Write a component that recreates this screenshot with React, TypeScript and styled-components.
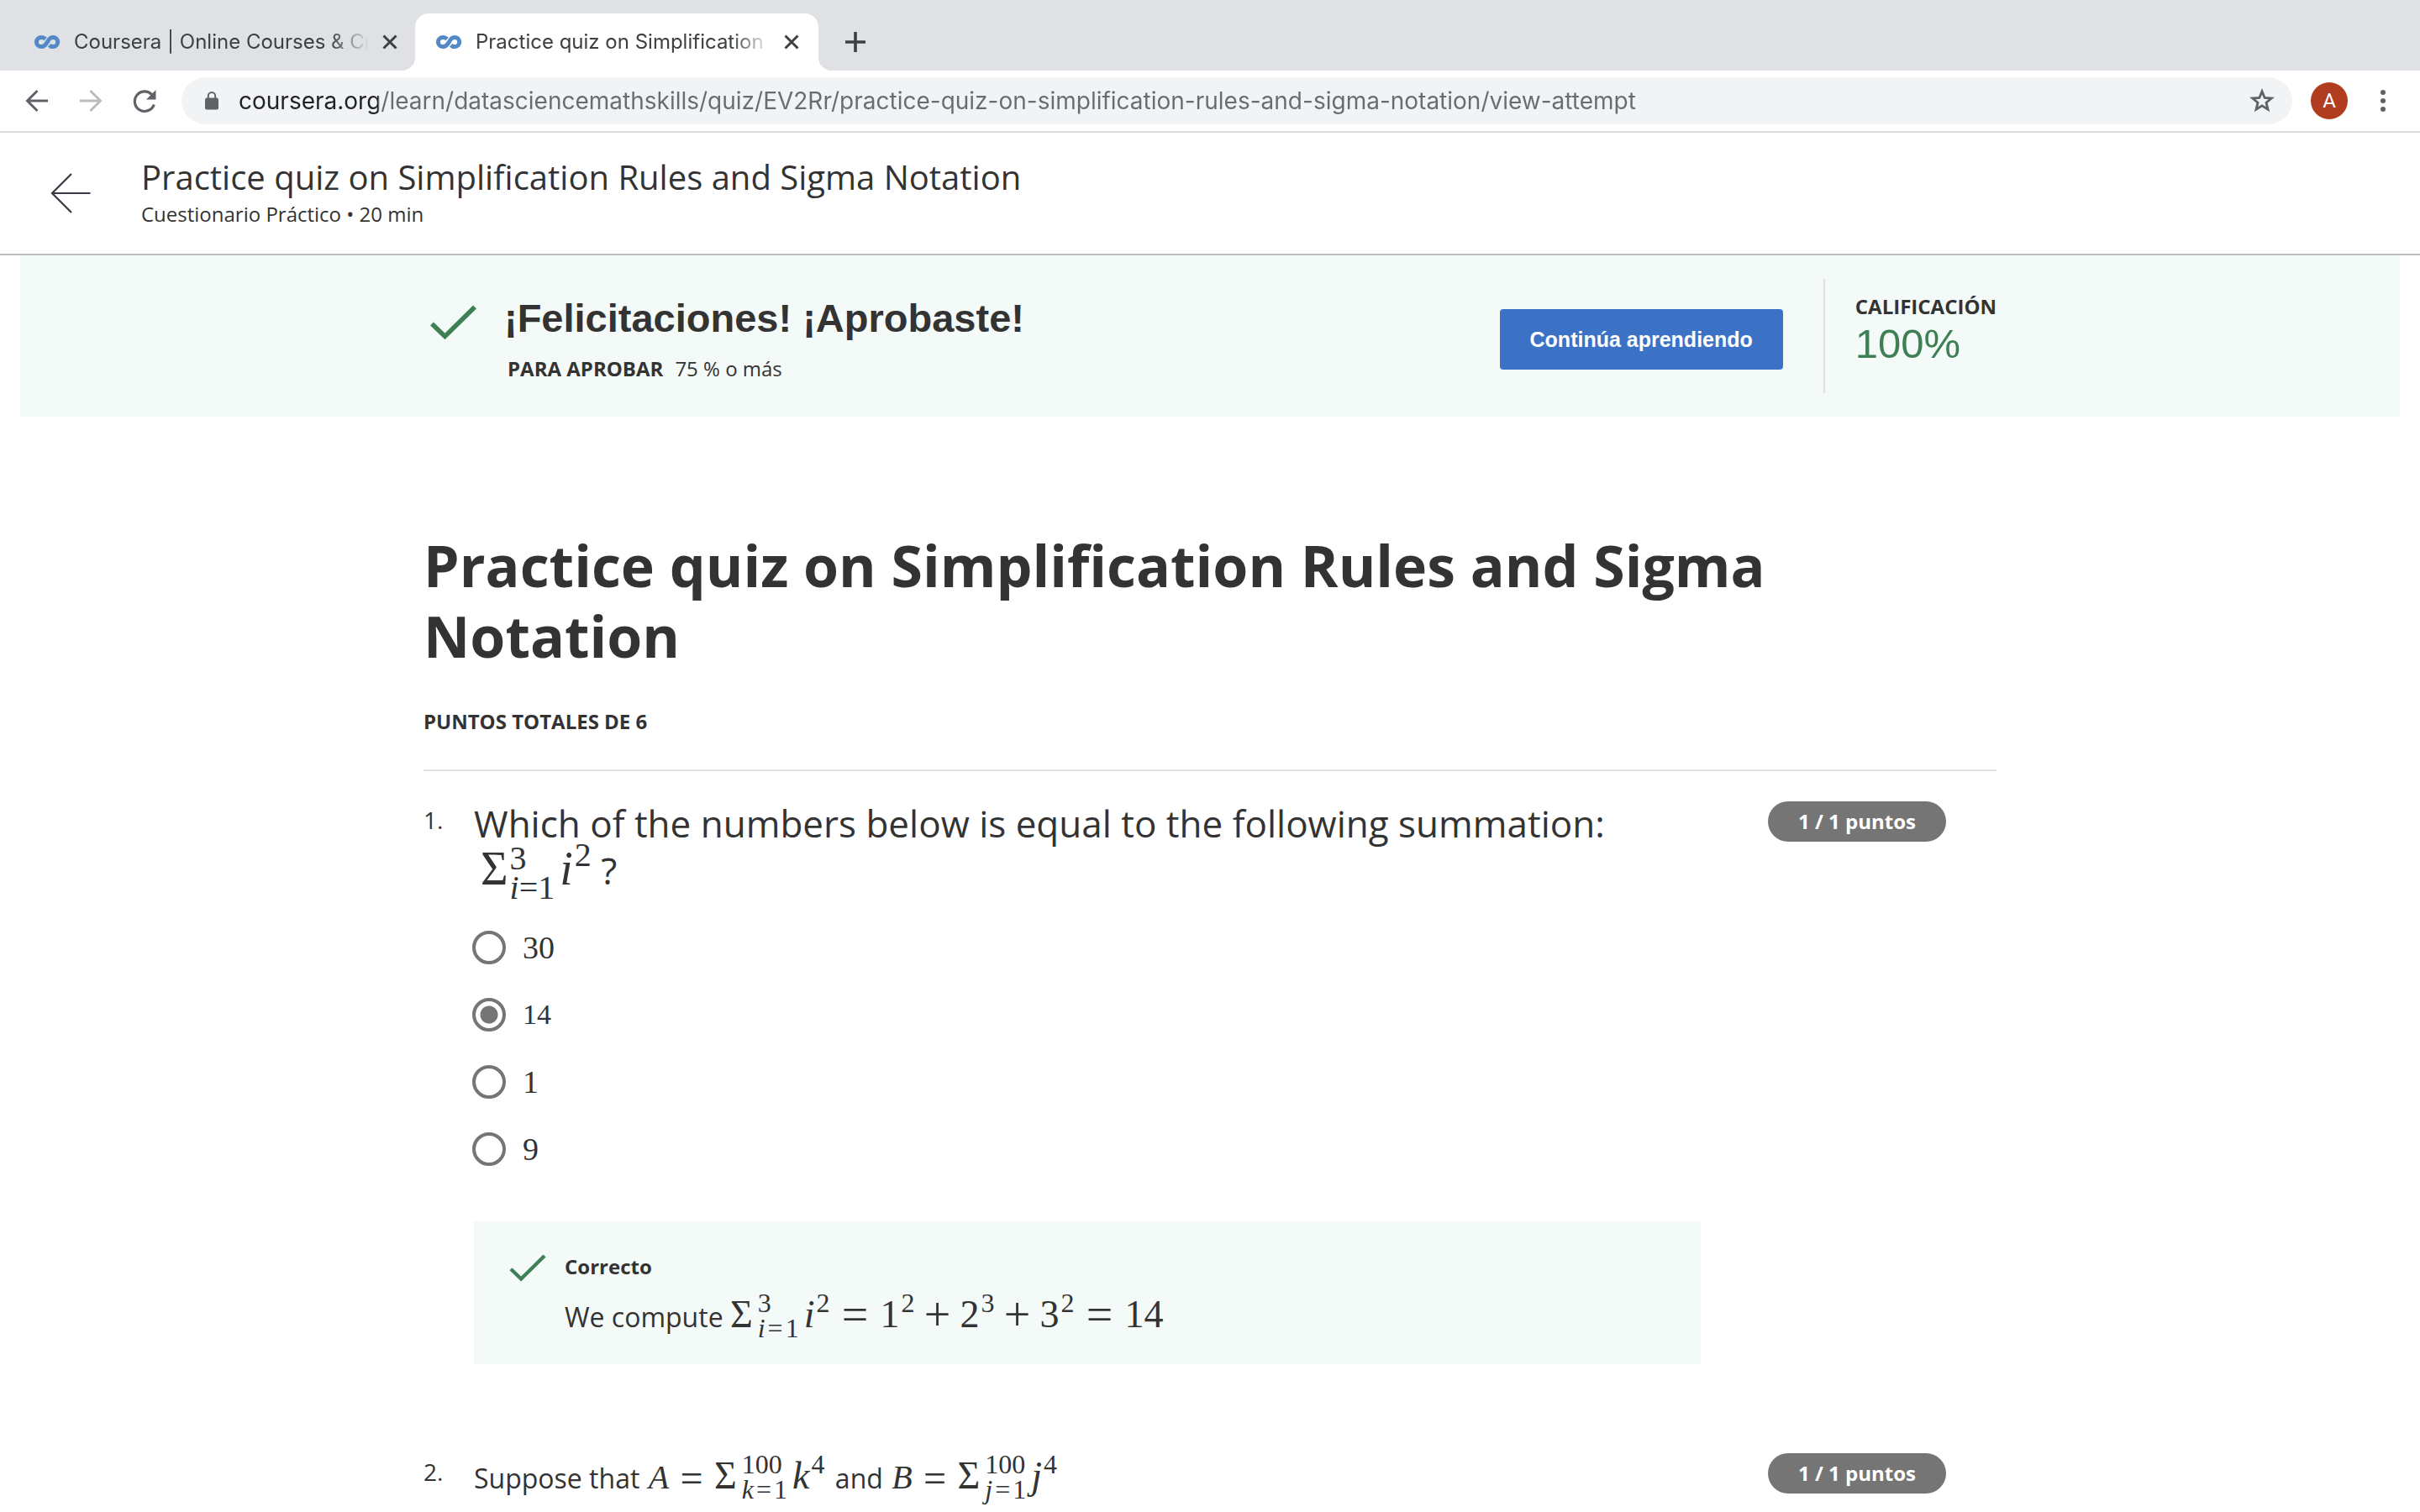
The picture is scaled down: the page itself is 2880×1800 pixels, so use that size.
import React from "react";
import styled, { createGlobalStyle, css } from "styled-components";

const ink = "#333333";
const green = "#3f7f56";
const mint = "#f3faf8";
const sans = '"Open Sans", "Noto Sans", sans-serif';
const arial = '"Liberation Sans", Arial, sans-serif';
const serif = '"Liberation Serif", "Times New Roman", serif';
const ui = "Inter, Roboto, sans-serif";

const GlobalStyle = createGlobalStyle`
  *, *::before, *::after { box-sizing: border-box; }
  body { margin: 0; background: #ffffff; color: ${ink}; font-family: ${sans}; }
  h1, h2, p { margin: 0; font-weight: 400; }
  button { padding: 0; border: 0; background: none; color: inherit; font: inherit; cursor: pointer; }
  svg { display: block; }
`;

/* Browser chrome */

const TabStrip = styled.div`
  display: flex;
  align-items: flex-end;
  height: 84px;
  padding-left: 16px;
  background: #dfe1e5;
  font-family: ${ui};
`;

const Tab = styled.div<{ $active?: boolean }>`
  position: relative;
  display: flex;
  align-items: center;
  width: 480px;
  height: 68px;
  padding: 0 20px 0 24px;
  border-radius: 16px 16px 0 0;
  color: #3c4043;

  & + & {
    margin-left: -2px;
  }

  ${(p) =>
    p.$active &&
    css`
      background: #ffffff;

      &::before,
      &::after {
        content: "";
        position: absolute;
        bottom: 0;
        width: 16px;
        height: 16px;
      }
      &::before {
        left: -16px;
        background: radial-gradient(circle at 0 0, transparent 16px, #ffffff 16px);
      }
      &::after {
        right: -16px;
        background: radial-gradient(circle at 100% 0, transparent 16px, #ffffff 16px);
      }
    `}
`;

const TabTitle = styled.span`
  flex: 1;
  min-width: 0;
  margin: 0 12px 0 16px;
  overflow: hidden;
  white-space: nowrap;
  font-size: 24px;
  line-height: 32px;
  mask-image: linear-gradient(to right, #000 calc(100% - 48px), transparent);
`;

const IconButton = styled.button<{ $color?: string }>`
  display: flex;
  align-items: center;
  justify-content: center;
  flex: none;
  color: ${(p) => p.$color ?? "#5f6368"};
`;

const NewTab = styled(IconButton)`
  width: 40px;
  height: 68px;
  margin-left: 24px;
`;

const Toolbar = styled.div`
  display: flex;
  align-items: center;
  height: 74px;
  padding: 0 28px;
  border-bottom: 2px solid #dadbe0;
  background: #ffffff;
  font-family: ${ui};
`;

const NavButtons = styled.div`
  display: flex;
  gap: 32px;
  margin-right: 28px;
`;

const Omnibox = styled.label`
  display: flex;
  align-items: center;
  flex: 1;
  height: 56px;
  padding: 0 20px 0 26px;
  border-radius: 28px;
  background: #f1f3f4;
`;

const Address = styled.input`
  flex: 1;
  min-width: 0;
  margin: 0 22px;
  padding: 0;
  border: 0;
  outline: 0;
  font-family: ${ui};
  font-size: 28px;
  line-height: 40px;
  color: #5f6368;
  background: linear-gradient(to right, #202124 166px, #696b6e 166px);
  background-clip: text;
  -webkit-background-clip: text;
  -webkit-text-fill-color: transparent;
`;

const Avatar = styled.button`
  width: 44px;
  height: 44px;
  margin: 0 26px 0 22px;
  border-radius: 50%;
  background: #b03d20;
  color: #ffffff;
  font-family: Roboto, sans-serif;
  font-size: 24px;
  line-height: 44px;
`;

/* Course header */

const Header = styled.header`
  display: flex;
  align-items: center;
  gap: 60px;
  height: 146px;
  padding: 0 60px;
  border-bottom: 2px solid #bdbdbd;
`;

const BackLink = styled.a`
  color: #373a44;
`;

const HeaderText = styled.div`
  padding-top: 2px;
`;

const HeaderTitle = styled.h2`
  font-size: 40px;
  line-height: 48px;
`;

const HeaderMeta = styled.p`
  font-size: 24px;
  line-height: 40px;
`;

/* Result banner */

const Banner = styled.section`
  margin: 0 24px;
  padding: 28px 0;
  background: ${mint};
`;

const Column = styled.div`
  width: 65vw;
  margin: 0 auto;
`;

const BannerRow = styled(Column)`
  display: flex;
  align-items: center;
`;

const BannerIcon = styled.div`
  align-self: flex-start;
  width: 96px;
  padding: 31px 0 0 8px;
`;

const BannerText = styled.div`
  flex: 1;
`;

const BannerTitle = styled.h2`
  margin-bottom: 14px;
  font-family: ${arial};
  font-size: 47px;
  font-weight: 700;
  line-height: 64px;
`;

const Small = styled.p`
  padding-left: 4px;
  font-size: 24px;
  line-height: 28px;
`;

const PassLabel = styled.strong`
  margin-right: 14px;
`;

const ContinueButton = styled.button`
  height: 72px;
  margin: 8px 48px 0 0;
  padding: 0 36px;
  border-radius: 4px;
  background: #3c72c6;
  color: #ffffff;
  font-family: ${arial};
  font-size: 25px;
  font-weight: 700;
`;

const Score = styled.div`
  height: 136px;
  padding: 17px 0 0 36px;
  border-left: 2px solid #e0e0e0;
`;

const ScoreLabel = styled.div`
  font-size: 24px;
  font-weight: 700;
  line-height: 32px;
`;

const ScoreValue = styled.div`
  color: ${green};
  font-family: ${arial};
  font-size: 49px;
  line-height: 56px;
`;

/* Quiz */

const Main = styled.main`
  padding-top: 135px;
`;

const QuizTitle = styled.h1`
  font-size: 68px;
  font-weight: 700;
  line-height: 84px;
`;

const TotalPoints = styled.p`
  padding: 42px 0 39px;
  border-bottom: 2px solid #e0e0e0;
  font-size: 24px;
  font-weight: 700;
  line-height: 36px;
`;

const QuestionList = styled.ol`
  margin: 0;
  padding: 0;
  list-style: none;
`;

const Question = styled.li`
  display: flex;
  padding: 34px 60px 70px 0;

  &:last-child {
    padding-bottom: 0;
  }
`;

const Number = styled.span`
  flex: none;
  width: 60px;
  font-size: 28px;
  line-height: 48px;
`;

const Body = styled.div`
  flex: 1;
  min-width: 0;
  margin-right: 80px;
`;

const Points = styled.span`
  flex: none;
  width: 212px;
  height: 48px;
  margin-top: 2px;
  border-radius: 24px;
  background: #757575;
  color: #ffffff;
  font-size: 24px;
  font-weight: 700;
  line-height: 48px;
  text-align: center;
`;

const Prompt = styled.p<{ $large?: boolean }>`
  font-size: ${(p) => (p.$large ? 44 : 32)}px;
  line-height: ${(p) => (p.$large ? 56 : 64)}px;
`;

const Options = styled.fieldset`
  margin: 24px 0 46px;
  padding: 0;
  border: 0;
`;

const Option = styled.label`
  display: flex;
  align-items: center;
  gap: 20px;
  height: 80px;
  margin-left: -2px;
`;

const Radio = styled.input`
  appearance: none;
  width: 40px;
  height: 40px;
  margin: 0;
  border: 4px solid #757575;
  border-radius: 50%;

  &:checked {
    background: radial-gradient(circle, #757575 10px, transparent 11px);
  }
`;

const OptionText = styled.span<{ $small?: boolean }>`
  font-family: ${serif};
  font-size: ${(p) => (p.$small ? 34 : 38)}px;
  line-height: 40px;
`;

const Feedback = styled.div`
  display: flex;
  gap: 22px;
  padding: 36px 42px 32px;
  background: ${mint};
`;

const FeedbackIcon = styled.div`
  padding-top: 3px;
`;

const FeedbackTitle = styled.p`
  margin-bottom: 18px;
  font-size: 24px;
  font-weight: 700;
  line-height: 36px;
`;

const FeedbackText = styled.p`
  font-size: 32px;
  line-height: 48px;
`;

/* Formulas */

type MathSize = "lg" | "md" | "sm";
const mathSizes = { lg: 56, md: 46, sm: 40 };
const mathMargins = { lg: "0 0 0 8px", md: "0 4px 0 0", sm: "0 0 0 2px" };

const Formula = styled.span<{ $size: MathSize }>`
  margin: ${(p) => mathMargins[p.$size]};
  font-family: ${serif};
  font-size: ${(p) => mathSizes[p.$size]}px;
  line-height: 0;
  white-space: nowrap;
`;

const Limits = styled.span<{ $large?: boolean }>`
  display: inline-flex;
  flex-direction: column;
  margin: -30px 6px -30px ${(p) => (p.$large ? 2 : 6)}px;
  font-size: ${(p) => (p.$large ? 40 : 32)}px;
  line-height: ${(p) => (p.$large ? 35 : 30)}px;
  vertical-align: 18px;
`;

const Power = styled.sup<{ $large?: boolean }>`
  margin-left: 2px;
  font-size: ${(p) => (p.$large ? 40 : 32)}px;
  line-height: 0;
  vertical-align: ${(p) => (p.$large ? 22 : 18)}px;
`;

const Operator = styled.span<{ $width: number; $small?: boolean }>`
  display: inline-block;
  width: ${(p) => p.$width}px;
  font-size: ${(p) => (p.$small ? 48 : 56)}px;
  text-align: center;
  vertical-align: -4px;
`;

const Equals = styled.span`
  padding: 0 3px;
`;

function Logo() {
  return (
    <svg width="32" height="18" viewBox="0 0 32 18" fill="none" stroke="#5389c6" strokeWidth="5" aria-hidden="true">
      <path d="M14.2 5.3C12.6 3.9 11 3.4 9.3 3.4 6 3.4 3.4 5.900 3.400 9s2.600 5.600 5.900 5.600c3.700 0 5.300-2.400 6.900-5.300C17.800 6 19.500 3.400 23 3.400c3.200 0 5.700 2.500 5.700 5.600s-2.500 5.600-5.700 5.600c-1.700 0-3.200-.7-4.300-1.900" />
    </svg>
  );
}

function CloseIcon() {
  return (
    <svg width="24" height="24" viewBox="0 0 24 24" stroke="#3c4043" strokeWidth="3" aria-hidden="true">
      <path d="M4.500 4.500l15 15M19.500 4.500l-15 15" />
    </svg>
  );
}

function Check({ width, height }: { width: number; height: number }) {
  return (
    <svg width={width} height={height} viewBox="0 0 55 42" fill="none" stroke={green} strokeWidth="5.500" aria-hidden="true">
      <path d="M2 22.500L17.500 37.500 53 2.500" />
    </svg>
  );
}

function Sum({ from, to, index, large }: { from: string; to: string; index: string; large?: boolean }) {
  return (
    <>
      Σ
      <Limits $large={large}>
        <span>{to}</span>
        <span>
          <i>{index}</i>
          {large ? "=" : <Equals>=</Equals>}
          {from}
        </span>
      </Limits>
    </>
  );
}

const tabs = [
  { title: "Coursera | Online Courses & Cr", active: false },
  { title: "Practice quiz on Simplification R", active: true },
];

const options = ["30", "14", "1", "9"];

export default function App() {
  return (
    <>
      <GlobalStyle />
      <TabStrip>
        {tabs.map((tab) => (
          <Tab key={tab.title} $active={tab.active}>
            <Logo />
            <TabTitle>{tab.title}</TabTitle>
            <IconButton aria-label="Close tab">
              <CloseIcon />
            </IconButton>
          </Tab>
        ))}
        <NewTab aria-label="New tab" $color="#3c4043">
          <svg width="24" height="24" viewBox="0 0 24 24" stroke="currentColor" strokeWidth="3.600">
            <path d="M12 0v24M0 12h24" />
          </svg>
        </NewTab>
      </TabStrip>
      <Toolbar>
        <NavButtons>
          <IconButton aria-label="Back">
            <svg width="32" height="32" viewBox="0 0 32 32" fill="none" stroke="currentColor" strokeWidth="3">
              <path d="M29 16H5M16.500 4L4.500 16l12 12" />
            </svg>
          </IconButton>
          <IconButton aria-label="Forward" $color="#babcbe">
            <svg width="32" height="32" viewBox="0 0 32 32" fill="none" stroke="currentColor" strokeWidth="3">
              <path d="M3 16h24M15.500 4l12 12-12 12" />
            </svg>
          </IconButton>
          <IconButton aria-label="Reload">
            <svg width="32" height="32" viewBox="0 0 32 32" fill="none" stroke="currentColor" strokeWidth="3.200">
              <path d="M27.300 20.500A11.800 11.800 0 1 1 24.500 8.300" />
              <path d="M29.500 3v11.500H18z" fill="currentColor" stroke="none" />
            </svg>
          </IconButton>
        </NavButtons>
        <Omnibox>
          <svg width="20" height="24" viewBox="0 0 20 24" fill="#5f6368" aria-hidden="true">
            <rect x="2" y="8.500" width="16" height="14" rx="2" />
            <path d="M5.800 9V6.200a4.200 4.200 0 0 1 8.400 0V9" fill="none" stroke="#5f6368" strokeWidth="2" />
          </svg>
          <Address
            aria-label="Address"
            defaultValue="coursera.org/learn/datasciencemathskills/quiz/EV2Rr/practice-quiz-on-simplification-rules-and-sigma-notation/view-attempt"
          />
          <IconButton aria-label="Bookmark">
            <svg width="32" height="32" viewBox="0 0 32 32" fill="none" stroke="currentColor" strokeWidth="2.800">
              <path d="M16 4.800l3.100 7.600 8.200.6-6.300 5.200 2 8-7-4.400-7 4.400 2-8L4.700 13l8.200-.6z" />
            </svg>
          </IconButton>
        </Omnibox>
        <Avatar aria-label="Profile">A</Avatar>
        <IconButton aria-label="Menu">
          <svg width="32" height="32" viewBox="0 0 32 32" fill="currentColor">
            <circle cx="16" cy="6" r="3" />
            <circle cx="16" cy="16" r="3" />
            <circle cx="16" cy="26" r="3" />
          </svg>
        </IconButton>
      </Toolbar>

      <Header>
        <BackLink href="#" aria-label="Volver">
          <svg width="48" height="48" viewBox="0 0 48 48" fill="none" stroke="currentColor" strokeWidth="2.200">
            <path d="M47.500 24H2M25 1L2 24l23 23" />
          </svg>
        </BackLink>
        <HeaderText>
          <HeaderTitle>Practice quiz on Simplification Rules and Sigma Notation</HeaderTitle>
          <HeaderMeta>Cuestionario Práctico • 20 min</HeaderMeta>
        </HeaderText>
      </Header>

      <Banner>
        <BannerRow>
          <BannerIcon>
            <Check width={55} height={42} />
          </BannerIcon>
          <BannerText>
            <BannerTitle>¡Felicitaciones! ¡Aprobaste!</BannerTitle>
            <Small>
              <PassLabel>PARA APROBAR</PassLabel>75 % o más
            </Small>
          </BannerText>
          <ContinueButton>Continúa aprendiendo</ContinueButton>
          <Score>
            <ScoreLabel>CALIFICACIÓN</ScoreLabel>
            <ScoreValue>100%</ScoreValue>
          </Score>
        </BannerRow>
      </Banner>

      <Main>
        <Column>
          <QuizTitle>Practice quiz on Simplification Rules and Sigma Notation</QuizTitle>
          <TotalPoints>PUNTOS TOTALES DE 6</TotalPoints>
          <QuestionList>
            <Question>
              <Number>1.</Number>
              <Body>
                <Prompt $large>
                  Which of the numbers below is equal to the following summation:{" "}
                  <Formula $size="lg">
                    <Sum large index="i" from="1" to="3" />
                    <i>i</i>
                    <Power $large>2</Power>
                  </Formula>{" "}
                  ?
                </Prompt>
                <Options>
                  {options.map((value) => (
                    <Option key={value}>
                      <Radio type="radio" name="q1" value={value} defaultChecked={value === "14"} />
                      <OptionText $small={value === "14"}>{value}</OptionText>
                    </Option>
                  ))}
                </Options>
                <Feedback>
                  <FeedbackIcon>
                    <Check width={44} height={33} />
                  </FeedbackIcon>
                  <div>
                    <FeedbackTitle>Correcto</FeedbackTitle>
                    <FeedbackText>
                      We compute{" "}
                      <Formula $size="md">
                        <Sum index="i" from="1" to="3" />
                        <i>i</i>
                        <Power>2</Power>
                        <Operator $width={60}>=</Operator>1<Power>2</Power>
                        <Operator $width={54}>+</Operator>2<Power>3</Power>
                        <Operator $width={54}>+</Operator>3<Power>2</Power>
                        <Operator $width={60}>=</Operator>14
                      </Formula>
                    </FeedbackText>
                  </div>
                </Feedback>
              </Body>
              <Points>1 / 1 puntos</Points>
            </Question>
            <Question>
              <Number>2.</Number>
              <Body>
                <Prompt>
                  Suppose that{" "}
                  <Formula $size="sm">
                    <i>A</i>
                    <Operator $small $width={54}>=</Operator>
                  </Formula>
                  <Formula $size="md">
                    <Sum index="k" from="1" to="100" />
                    <i>k</i>
                    <Power>4</Power>
                  </Formula>{" "}
                  and{" "}
                  <Formula $size="sm">
                    <i>B</i>
                    <Operator $small $width={54}>=</Operator>
                  </Formula>
                  <Formula $size="md">
                    <Sum index="j" from="1" to="100" />
                    <i>j</i>
                    <Power>4</Power>
                  </Formula>
                </Prompt>
              </Body>
              <Points>1 / 1 puntos</Points>
            </Question>
          </QuestionList>
        </Column>
      </Main>
    </>
  );
}
